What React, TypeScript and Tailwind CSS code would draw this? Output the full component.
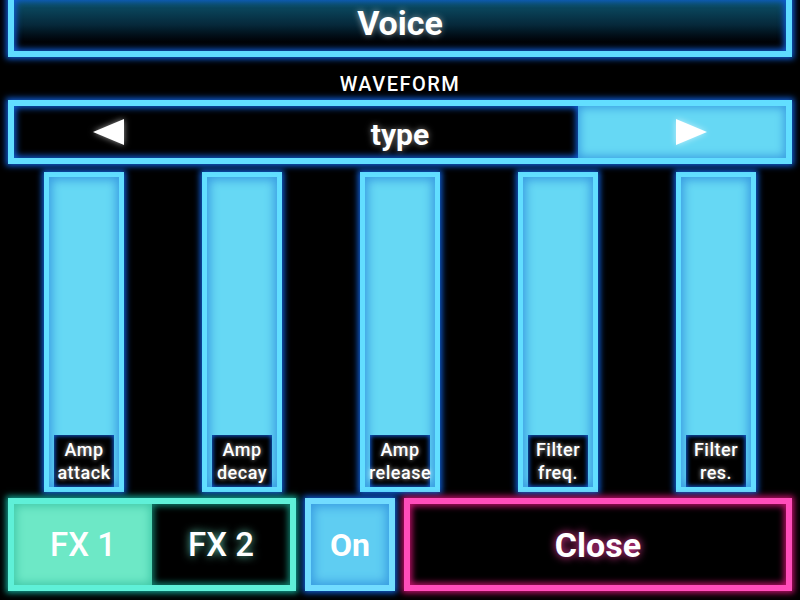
import React from 'react';

const sliders = [
  ['Amp', 'attack'],
  ['Amp', 'decay'],
  ['Amp', 'release'],
  ['Filter', 'freq.'],
  ['Filter', 'res.'],
];

const ArrowLeft = () => (
  <svg width="31" height="26" viewBox="0 0 31 26" className="drop-shadow-[0_0_3px_rgba(255,255,255,0.6)]">
    <polygon points="0,13 31,0 31,26" fill="#ffffff" />
  </svg>
);

const ArrowRight = () => (
  <svg width="31" height="26" viewBox="0 0 31 26" className="drop-shadow-[0_0_3px_rgba(255,255,255,0.6)]">
    <polygon points="31,13 0,0 0,26" fill="#ffffff" />
  </svg>
);

export default function App() {
  return (
    <div className="w-[800px] h-[600px] overflow-hidden bg-black text-white font-['Roboto',sans-serif] flex flex-col px-[8px]">
      {/* Titre */}
      <div className="-mt-[7px] h-[64px] shrink-0 border-[6px] border-[#5fdcff] bg-gradient-to-b from-[#0c566f] via-[#06283a] to-[#000000] shadow-[0_0_6px_2px_#0f5ed8,inset_0_0_6px_2px_#0f5ed8] flex items-center justify-center pb-[5px]">
        <span className="text-[34px] font-bold leading-none [text-shadow:0_0_6px_rgba(255,255,255,0.5)]">Voice</span>
      </div>

      <div className="mt-[17px] h-[20px] flex items-center justify-center text-[20px] font-medium tracking-[1.5px] leading-none">
        WAVEFORM
      </div>

      {/* Sélecteur de forme d'onde */}
      <div className="mt-[6px] h-[64px] shrink-0 border-[6px] border-[#62deff] shadow-[0_0_6px_2px_#0f5ed8] relative flex">
        <div className="flex-1 bg-black shadow-[inset_0_0_6px_2px_#0f5ed8]" />
        <div className="w-[208px] bg-[#66d8f4] shadow-[inset_0_0_8px_2px_#3a9ee2]" />
        <div className="absolute inset-0 flex items-center justify-between px-[79px]">
          <ArrowLeft />
          <span className="pt-[5px] text-[30px] font-bold leading-none [text-shadow:0_0_6px_rgba(255,255,255,0.5)]">type</span>
          <ArrowRight />
        </div>
      </div>

      {/* Curseurs */}
      <div className="mt-[8px] -mx-[3px] h-[320px] shrink-0 grid grid-cols-5">
        {sliders.map(([a, b]) => (
          <div key={b} className="flex justify-center">
            <div className="w-[80px] h-full border-[5px] border-[#62deff] bg-[#66d8f4] shadow-[0_0_6px_2px_#0f5ed8,inset_0_0_10px_3px_#3a9ee2] flex flex-col justify-end">
              <div className="mx-[5px] h-[52px] bg-black shadow-[inset_0_0_4px_1px_#0f5ed8] flex flex-col items-center justify-center text-[18px] font-medium leading-[23px] tracking-[0.5px] [text-shadow:0_0_4px_rgba(255,255,255,0.7)]">
                <span>{a}</span>
                <span>{b}</span>
              </div>
            </div>
          </div>
        ))}
      </div>

      {/* Barre du bas */}
      <div className="mt-[6px] h-[93px] shrink-0 flex gap-[9px]">
        <div className="w-[288px] border-[6px] border-[#5ff0d8] shadow-[0_0_6px_2px_#10a090] flex">
          <div className="flex-1 bg-[#6de8c6] shadow-[inset_0_0_8px_2px_#40c8a8] flex items-center justify-center text-[33px] font-medium leading-none">
            FX 1
          </div>
          <div className="flex-1 bg-black shadow-[inset_0_0_6px_2px_#10806e] flex items-center justify-center text-[33px] font-medium leading-none [text-shadow:0_0_8px_rgba(120,255,220,0.8)]">
            FX 2
          </div>
        </div>
        <div className="w-[90px] border-[6px] border-[#72dcff] bg-[#5fcdf2] shadow-[0_0_6px_2px_#0f5ed8,inset_0_0_10px_3px_#3a9ee2] flex items-center justify-center text-[32px] font-bold leading-none">
          On
        </div>
        <div className="flex-1 border-[6px] border-[#ff4dba] bg-black shadow-[0_0_6px_2px_#c0106a,inset_0_0_6px_2px_#c0106a] flex items-center justify-center text-[34px] font-bold leading-none [text-shadow:0_0_8px_#ff3fa8]">
          Close
        </div>
      </div>
    </div>
  );
}
